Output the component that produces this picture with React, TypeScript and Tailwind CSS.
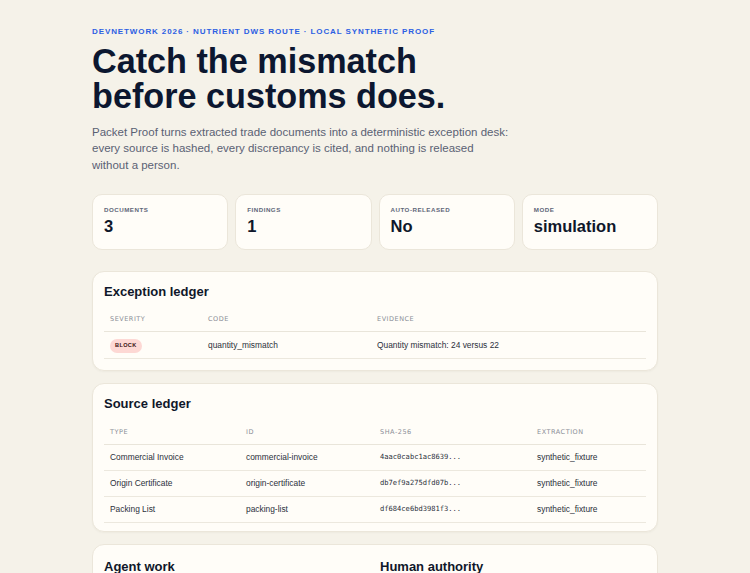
import React from 'react';

const stats = [
  { label: 'Documents', value: '3' },
  { label: 'Findings', value: '1' },
  { label: 'Auto-released', value: 'No' },
  { label: 'Mode', value: 'simulation' },
];

const sources = [
  { type: 'Commercial Invoice', id: 'commercial-invoice', sha: '4aac0cabc1ac8639...', extraction: 'synthetic_fixture' },
  { type: 'Origin Certificate', id: 'origin-certificate', sha: 'db7ef9a275dfd07b...', extraction: 'synthetic_fixture' },
  { type: 'Packing List', id: 'packing-list', sha: 'df684ce6bd3981f3...', extraction: 'synthetic_fixture' },
];

const th = "px-[6px] h-[23px] text-left font-normal uppercase text-[6.5px] tracking-[0.08em] text-[#8b8e97] font-['DejaVu_Sans',sans-serif] border-b border-[#e9e5da]";
const cell = "px-[6px] text-[#2b303b] border-b border-[#ece8de]";
const td = `${cell} text-[8.4px]`;
const mono = `${cell} text-[7.1px] font-['DejaVu_Sans_Mono',monospace]`;

function Card({ title, className = 'pb-[11px]', children }: { title: string; className?: string; children: React.ReactNode }) {
  return (
    <section className={`rounded-[12px] border border-[#ebe6da] bg-[#fffdf8] px-[11px] pt-[11px] shadow-[0_1px_2px_rgba(60,50,20,0.04)] ${className}`}>
      <h2 className="mb-[8px] text-[13px] font-bold leading-[18px] text-[#0f172a]">{title}</h2>
      {children}
    </section>
  );
}

export default function App() {
  return (
    <div className="min-h-screen bg-[#f5f2e9] font-['Liberation_Sans',Arial,sans-serif]">
      <div className="mx-auto w-[566px] pt-[26px] pb-10">
        <p className="text-[8px] font-bold uppercase leading-[12px] tracking-[0.112em] text-[#2c5fe3]">
          DevNetwork 2026 · Nutrient DWS route · Local synthetic proof
        </p>
        <h1 className="mt-[6px] text-[34.2px] font-bold leading-[35px] text-[#0c1730]">
          Catch the mismatch
          <br />
          before customs does.
        </h1>
        <p className="mt-[10px] text-[11.5px] leading-[16.3px] text-[#5a6174]">
          Packet Proof turns extracted trade documents into a deterministic exception desk:
          <br />
          every source is hashed, every discrepancy is cited, and nothing is released
          <br />
          without a person.
        </p>

        <div className="mt-[21px] grid grid-cols-4 gap-[7px]">
          {stats.map((s) => (
            <div key={s.label} className="h-[56px] rounded-[10px] border border-[#ebe6da] bg-[#fffdf8] px-[11px] pt-[11px]">
              <div className="text-[6.2px] font-bold uppercase leading-[8px] tracking-[0.08em] text-[#606779]">{s.label}</div>
              <div className="mt-[2px] text-[16.5px] font-bold leading-[20px] text-[#0f172a]">{s.value}</div>
            </div>
          ))}
        </div>

        <div className="mt-[21px] flex flex-col gap-3">
          <Card title="Exception ledger">
            <table className="w-full table-fixed border-collapse">
              <thead>
                <tr>
                  <th className={`${th} w-[98px]`}>Severity</th>
                  <th className={`${th} w-[169px]`}>Code</th>
                  <th className={th}>Evidence</th>
                </tr>
              </thead>
              <tbody>
                <tr className="h-[27px]">
                  <td className={td}>
                    <span className="inline-block rounded-full bg-[#fdd8d4] px-[5px] py-[3.5px] text-[5.6px] font-bold uppercase leading-[7px] tracking-[0.06em] text-[#3a1212]">
                      Block
                    </span>
                  </td>
                  <td className={td}>quantity_mismatch</td>
                  <td className={td}>Quantity mismatch: 24 versus 22</td>
                </tr>
              </tbody>
            </table>
          </Card>

          <Card title="Source ledger" className="pb-[8px]">
            <table className="w-full table-fixed border-collapse">
              <thead>
                <tr>
                  <th className={`${th} w-[136px]`}>Type</th>
                  <th className={`${th} w-[134px]`}>ID</th>
                  <th className={`${th} w-[157px]`}>SHA-256</th>
                  <th className={th}>Extraction</th>
                </tr>
              </thead>
              <tbody>
                {sources.map((r) => (
                  <tr key={r.id} className="h-[26px]">
                    <td className={td}>{r.type}</td>
                    <td className={td}>{r.id}</td>
                    <td className={mono}>{r.sha}</td>
                    <td className={td}>{r.extraction}</td>
                  </tr>
                ))}
              </tbody>
            </table>
          </Card>

          <section className="rounded-[12px] border border-[#ebe6da] bg-[#fffdf8] px-[11px] pt-[13px] pb-10">
            <div className="grid grid-cols-2 gap-[10px]">
              <h2 className="text-[13px] font-bold leading-[18px] text-[#0f172a]">Agent work</h2>
              <h2 className="text-[13px] font-bold leading-[18px] text-[#0f172a]">Human authority</h2>
            </div>
          </section>
        </div>
      </div>
    </div>
  );
}
